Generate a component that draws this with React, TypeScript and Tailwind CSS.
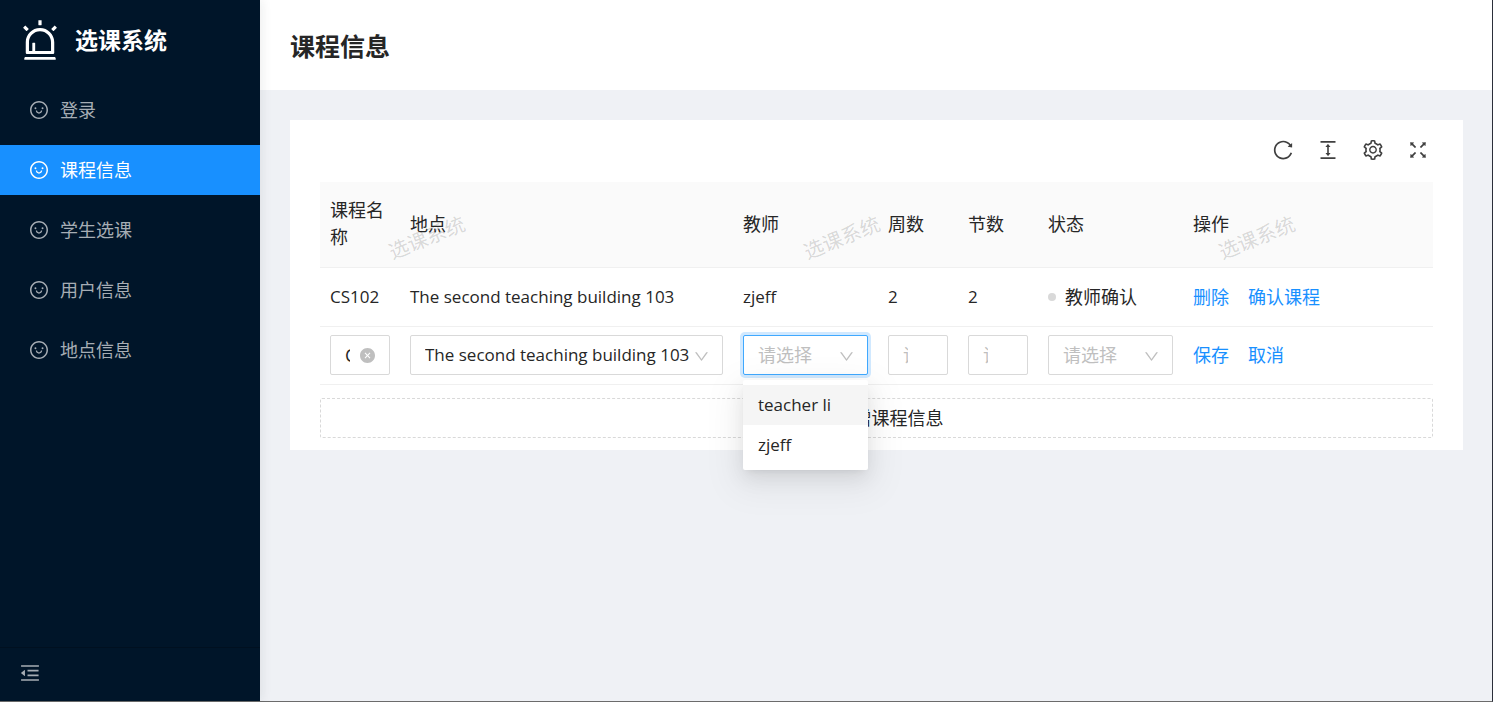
import React from "react";
import {
  AiFillCloseCircle,
  AiOutlineAlert,
  AiOutlineColumnHeight,
  AiOutlineDown,
  AiOutlineFullscreen,
  AiOutlineMenuFold,
  AiOutlinePlus,
  AiOutlineReload,
  AiOutlineSetting,
  AiOutlineSmile,
} from "react-icons/ai";

// Trims the empty margin round each glyph so that it fills its box.
const tight = "64 64 896 896";

const menu = ["登录", "课程信息", "学生选课", "用户信息", "地点信息"];

const tools = [
  { label: "刷新", Icon: AiOutlineReload },
  { label: "密度", Icon: AiOutlineColumnHeight },
  { label: "列设置", Icon: AiOutlineSetting },
  { label: "全屏", Icon: AiOutlineFullscreen },
];

const headers = ["课程名称", "地点", "教师", "周数", "节数", "状态", "操作"];

type SelectProps = {
  label: string;
  value: string;
  options: string[];
  placeholder?: boolean;
  open?: boolean;
};

function Select({ label, value, options, placeholder, open }: SelectProps) {
  return (
    <div className="relative">
      <select
        aria-label={label}
        defaultValue={value}
        className={`block h-10 w-full appearance-none rounded-xs border bg-white pr-8 pl-[14px] outline-none ${
          placeholder ? "text-lg text-[#bfbfbf]" : "text-[17px]"
        } ${
          open
            ? "border-[#40a9ff] shadow-[0_0_0_3px_rgba(24,144,255,0.2)]"
            : "border-[#d9d9d9]"
        }`}
      >
        <option>{value}</option>
        {options.map((o) => (
          <option key={o}>{o}</option>
        ))}
      </select>
      <AiOutlineDown
        viewBox={tight}
        className="pointer-events-none absolute top-[14px] right-[14px] size-[15px] text-[#bfbfbf]"
      />
      {open && (
        <ul
          role="listbox"
          aria-label={label}
          className="absolute top-full left-0 z-10 mt-[5px] w-full rounded-xs bg-white py-[5px] text-[17px] shadow-[0_4px_8px_-5px_rgba(0,0,0,0.12),0_8px_20px_0_rgba(0,0,0,0.08),0_11px_35px_10px_rgba(0,0,0,0.05)]"
        >
          {options.map((o, i) => (
            <li
              key={o}
              role="option"
              aria-selected={i === 0}
              className={`flex h-10 items-center px-[15px] ${i === 0 ? "bg-[#f5f5f5]" : ""}`}
            >
              {o}
            </li>
          ))}
        </ul>
      )}
    </div>
  );
}

function TextBox({ label, value }: { label: string; value?: string }) {
  return (
    <div className="relative">
      <input
        aria-label={label}
        defaultValue={value}
        placeholder="请输入"
        className="block h-10 w-full rounded-xs border border-[#d9d9d9] bg-white pr-[39px] pl-[14px] text-lg outline-none placeholder:text-[#bfbfbf]"
      />
      {value && (
        <button
          type="button"
          aria-label="清除"
          className="absolute top-[13px] right-[15px] text-[#bfbfbf]"
        >
          <AiFillCloseCircle viewBox={tight} className="size-[15px]" />
        </button>
      )}
    </div>
  );
}

function Actions({ items }: { items: string[] }) {
  return (
    <div className="flex gap-[19px]">
      {items.map((t) => (
        <a key={t} href="#" className="text-lg text-[#1890ff]">
          {t}
        </a>
      ))}
    </div>
  );
}

export default function App() {
  return (
    <div className="flex min-h-screen border-r border-b border-r-[#2b2f3a] border-b-[#6b6b6b] bg-[#eff1f5] font-['Open_Sans','Noto_Sans_CJK_SC',sans-serif] text-[#262626]">
      <aside className="relative z-10 flex w-[260px] shrink-0 flex-col bg-[#001529] shadow-[2px_0_10px_rgba(29,35,41,0.08)]">
        <a href="#" className="flex h-20 items-center gap-[15px] px-5 text-white">
          <AiOutlineAlert viewBox={tight} className="size-10" />
          <span className="text-[23px] font-bold">选课系统</span>
        </a>
        <nav className="mt-[5px] flex flex-1 flex-col gap-[10px]">
          {menu.map((m, i) => (
            <a
              key={m}
              href="#"
              className={`flex h-[50px] items-center gap-3 px-[30px] text-lg ${
                i === 1 ? "bg-[#1890ff] text-white" : "text-[#a6adb4]"
              }`}
            >
              <AiOutlineSmile viewBox={tight} className="size-[18px]" />
              {m}
            </a>
          ))}
        </nav>
        <div className="flex h-[54px] items-center border-t border-[#001020] px-5 pb-[3px]">
          <button type="button" aria-label="收起菜单" className="text-[#a6adb4]">
            <AiOutlineMenuFold viewBox={tight} className="size-5" />
          </button>
        </div>
      </aside>

      <div className="min-w-0 flex-1">
        <header className="flex h-[90px] items-center bg-white px-[30px] pt-1">
          <h1 className="text-[25px] font-bold">课程信息</h1>
        </header>

        <main className="p-[30px] pr-[29px]">
          <section className="relative bg-white px-[30px] pb-3">
            <div className="flex h-[62px] items-center justify-end gap-[25px] pr-[5px] pb-[2px] text-[#404040]">
              {tools.map(({ label, Icon }) => (
                <button key={label} type="button" aria-label={label}>
                  <Icon viewBox={tight} className="size-5" />
                </button>
              ))}
            </div>

            <table className="w-full table-fixed text-left text-[17px]">
              <colgroup>
                <col className="w-20" />
                <col />
                <col className="w-[145px]" />
                <col className="w-20" />
                <col className="w-20" />
                <col className="w-[145px]" />
                <col className="w-[250px]" />
              </colgroup>
              <thead className="bg-[#fafafa]">
                <tr className="h-[85px] border-b border-[#f0f0f0]">
                  {headers.map((h) => (
                    <th key={h} className="px-[10px] text-lg leading-[27px] font-normal">
                      {h}
                    </th>
                  ))}
                </tr>
              </thead>
              <tbody>
                <tr className="h-[59px] border-b border-[#f0f0f0]">
                  <td className="px-[10px]">CS102</td>
                  <td className="px-[10px]">The second teaching building 103</td>
                  <td className="px-[10px]">zjeff</td>
                  <td className="px-[10px]">2</td>
                  <td className="px-[10px]">2</td>
                  <td className="px-[10px]">
                    <span className="flex items-center gap-[9px] text-lg">
                      <span className="size-2 rounded-full bg-[#d9d9d9]" />
                      教师确认
                    </span>
                  </td>
                  <td className="px-[10px]">
                    <Actions items={["删除", "确认课程"]} />
                  </td>
                </tr>
                <tr className="h-[58px] border-b border-[#f0f0f0]">
                  <td className="px-[10px]">
                    <TextBox label="课程名称" value="CS102" />
                  </td>
                  <td className="px-[10px]">
                    <Select label="地点" value="The second teaching building 103" options={[]} />
                  </td>
                  <td className="px-[10px]">
                    <Select
                      label="教师"
                      value="请选择"
                      options={["teacher li", "zjeff"]}
                      placeholder
                      open
                    />
                  </td>
                  <td className="px-[10px]">
                    <TextBox label="周数" />
                  </td>
                  <td className="px-[10px]">
                    <TextBox label="节数" />
                  </td>
                  <td className="px-[10px]">
                    <Select label="状态" value="请选择" options={["教师确认"]} placeholder />
                  </td>
                  <td className="px-[10px]">
                    <Actions items={["保存", "取消"]} />
                  </td>
                </tr>
              </tbody>
            </table>

            <button
              type="button"
              className="mt-[13px] flex h-10 w-full items-center justify-center gap-2 rounded-xs border border-dashed border-[#d9d9d9] bg-white text-lg"
            >
              <AiOutlinePlus viewBox={tight} className="size-[18px]" />
              新增课程信息
            </button>

            <div
              aria-hidden="true"
              className="pointer-events-none absolute inset-x-0 top-[87px] flex h-[62px] items-center gap-[335px] overflow-hidden pl-[97px] text-xl text-black/15"
            >
              {[0, 1, 2].map((n) => (
                <span key={n} className="w-20 shrink-0 -rotate-[22deg]">
                  选课系统
                </span>
              ))}
            </div>
          </section>
        </main>
      </div>
    </div>
  );
}
